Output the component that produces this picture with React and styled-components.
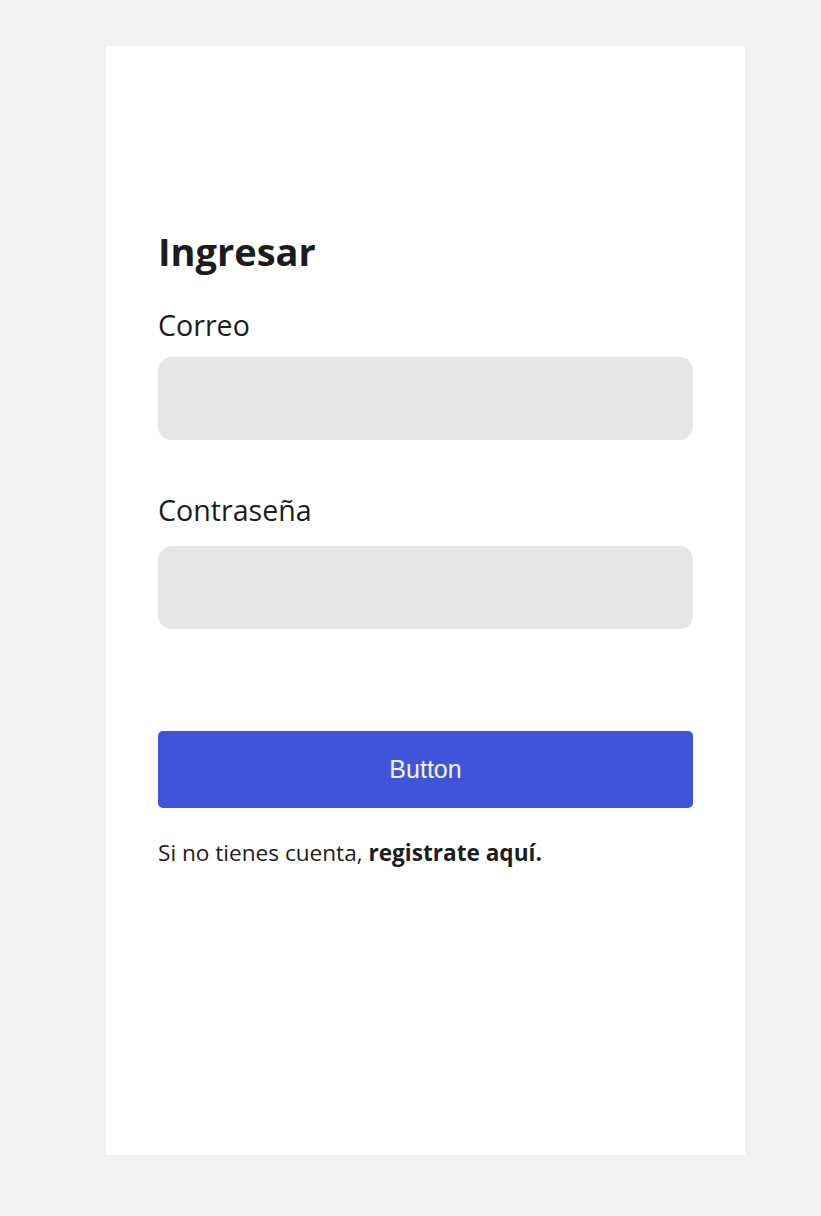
import React from 'react'
import styled, { createGlobalStyle } from 'styled-components'

const GlobalS = createGlobalStyle`
    html, body {
        margin: 0;
        padding: 0;
        background: #f2f2f2;
        font-family: 'Open Sans', 'Noto Sans', sans-serif;
        color: #1c1c1c;
    }
`

const PageS = styled.div`
    padding: 46px 76px 61px 106px;
`

const CardS = styled.div`
    width: 639px;
    height: 1109px;
    box-sizing: border-box;
    background: #fff;
    padding: 186px 52px 0 52px;
    display: flex;
    flex-direction: column;
`

const TitleS = styled.h1`
    margin: 0 0 38px;
    font-size: 38px;
    line-height: 1;
    font-weight: 700;
`

const FieldS = styled.label`
    display: flex;
    flex-direction: column;
    gap: ${(p) => p.$labelGap}px;
    margin-bottom: ${(p) => p.$gap || 0}px;
    > span {
        font-size: 28.6px;
        line-height: 1.2;
    }
`

const InputS = styled.input`
    height: 83px;
    box-sizing: border-box;
    border: none;
    border-radius: 14px;
    background: #e6e6e6;
    outline: none;
    padding: 0 20px;
    font-size: 22px;
    font-family: inherit;
`

const ButtonS = styled.button`
    height: 77px;
    border: none;
    border-radius: 5px;
    background: #4054d9;
    color: #f2f3fb;
    font-family: 'Liberation Sans', Arial, sans-serif;
    font-size: 25px;
    cursor: pointer;
`

const FooterS = styled.p`
    margin: 31px 0 0;
    font-size: 22.6px;
    line-height: 1.2;
    > b {
        font-weight: 700;
    }
`

const App = () => {
    return (
        <>
            <GlobalS />
            <PageS>
                <CardS>
                    <TitleS>Ingresar</TitleS>
                    <FieldS $labelGap={15} $gap={53}>
                        <span>Correo</span>
                        <InputS type="email" />
                    </FieldS>
                    <FieldS $labelGap={18} $gap={102}>
                        <span>Contraseña</span>
                        <InputS type="password" />
                    </FieldS>
                    <ButtonS>Button</ButtonS>
                    <FooterS>
                        Si no tienes cuenta, <b>registrate aquí.</b>
                    </FooterS>
                </CardS>
            </PageS>
        </>
    )
}

export default App
